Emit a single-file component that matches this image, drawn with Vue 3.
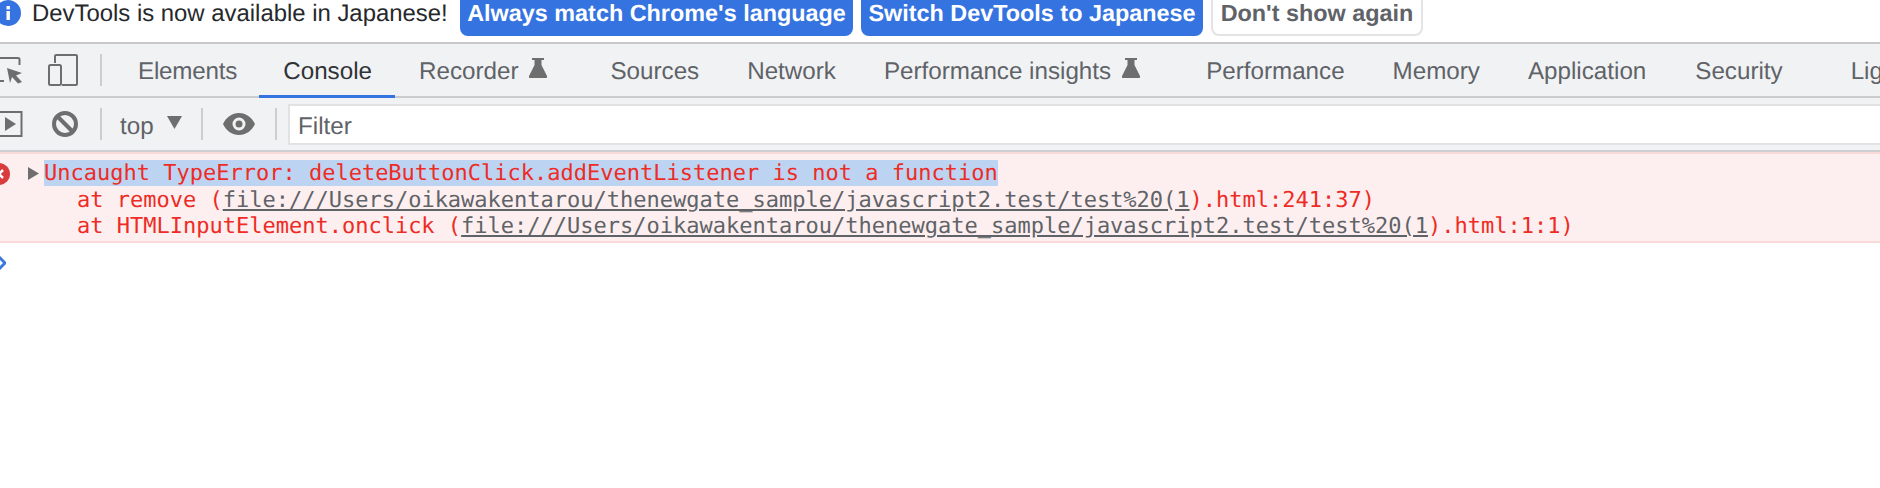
<script setup>
const tabs = [
  { name: 'Elements', pad: 22 },
  { name: 'Console', active: true, pad: 23 },
  { name: 'Recorder', flask: true, pad: 39 },
  { name: 'Sources', pad: 24 },
  { name: 'Network', pad: 24 },
  { name: 'Performance insights', flask: true, pad: 42 },
  { name: 'Performance', pad: 24 },
  { name: 'Memory', pad: 24 },
  { name: 'Application', pad: 25 },
  { name: 'Security', pad: 44 },
  { name: 'Lighthouse', pad: 24 }
]
const base = 'file:///Users/oikawakentarou/thenewgate_sample/javascript2.test/test%20(1'
</script>

<template>
  <div class="page">
    <div class="banner">
      <svg class="info" width="26" height="26" viewBox="0 0 26 26">
        <circle cx="13" cy="13" r="13" fill="#3473e0" />
        <rect x="11.500" y="6" width="3.400" height="3.400" fill="#fff" />
        <rect x="11.500" y="11" width="3.400" height="9" fill="#fff" />
      </svg>
      <span class="banner-text">DevTools is now available in Japanese!</span>
      <button class="btn primary first">Always match Chrome's language</button>
      <button class="btn primary">Switch DevTools to Japanese</button>
      <button class="btn plain">Don't show again</button>
    </div>

    <div class="tabbar">
      <svg class="inspect" width="30" height="32" viewBox="0 0 30 32">
        <path d="M0 4H24a1.500 1.500 0 0 1 1.500 1.500V11M0 27H10" fill="none" stroke="#6e6e6e" stroke-width="2" />
        <path d="M13 14L28 19L22 21.500L28 28L24 29.500L18 23L16 29Z" fill="#6e6e6e" />
      </svg>
      <svg class="device" width="30" height="32" viewBox="0 0 30 32">
        <path d="M7 9V2a1 1 0 0 1 1-1H28a1 1 0 0 1 1 1V30a1 1 0 0 1-1 1H14" fill="none" stroke="#6e6e6e" stroke-width="2" />
        <rect x="1" y="11" width="12" height="20" rx="1.500" fill="none" stroke="#6e6e6e" stroke-width="2" />
      </svg>
      <span class="sep sep-first"></span>
      <div class="tabs">
        <div
          v-for="t in tabs"
          :key="t.name"
          class="tab"
          :class="{ active: t.active }"
          :style="{ paddingRight: t.pad + 'px' }"
        >
          <span>{{ t.name }}</span>
          <svg v-if="t.flask" class="flask" width="18" height="20" viewBox="0 0 18 20">
            <path d="M3 0H15V2H12.500V7L18 18a1.300 1.300 0 0 1-1 2H1a1.300 1.300 0 0 1-1-2L5.500 7V2H3Z" fill="#6e6e6e" />
          </svg>
        </div>
      </div>
    </div>

    <div class="filterbar">
      <svg class="play" width="23" height="26" viewBox="0 0 23 26">
        <path d="M0 1H21.500V25H0" fill="none" stroke="#6e6e6e" stroke-width="2" />
        <path d="M5 6L16 13L5 20Z" fill="#6e6e6e" />
      </svg>
      <svg class="block" width="26" height="26" viewBox="0 0 26 26">
        <circle cx="13" cy="13" r="11" fill="none" stroke="#6e6e6e" stroke-width="4" />
        <path d="M5.500 5.500L20.500 20.500" stroke="#6e6e6e" stroke-width="4" />
      </svg>
      <span class="sep sep-a"></span>
      <span class="context">top</span>
      <svg class="caret" width="15" height="13" viewBox="0 0 15 13"><path d="M0 0H15L7.500 13Z" fill="#6e6e6e" /></svg>
      <span class="sep sep-b"></span>
      <svg class="eye" width="32" height="22" viewBox="0 0 32 22">
        <path fill-rule="evenodd" d="M0 11C3.500 4 9 0 16 0S28.500 4 32 11C28.500 18 23 22 16 22S3.500 18 0 11ZM16 4.500a6.500 6.500 0 1 0 0 13a6.500 6.500 0 1 0 0-13ZM16 7.500a3.500 3.500 0 1 1 0 7a3.500 3.500 0 1 1 0-7Z" fill="#6e6e6e" />
      </svg>
      <span class="sep sep-c"></span>
      <div class="filter">Filter</div>
    </div>

    <div class="error">
      <svg class="err-icon" width="22" height="22" viewBox="0 0 22 22">
        <circle cx="11" cy="11" r="11" fill="#d93c3c" />
        <path d="M7 7L15 15M15 7L7 15" stroke="#fff" stroke-width="2.500" />
      </svg>
      <svg class="arrow" width="11" height="13" viewBox="0 0 11 13"><path d="M0 0L11 6.500L0 13Z" fill="#6e6e6e" /></svg>
      <div class="msg">
        <div class="sel">Uncaught TypeError: deleteButtonClick.addEventListener is not a function</div>
        <div class="line">at remove (<span class="link">{{ base }}</span>).html:241:37)</div>
        <div class="line">at HTMLInputElement.onclick (<span class="link">{{ base }}</span>).html:1:1)</div>
      </div>
    </div>

    <div class="prompt">
      <svg width="8" height="14" viewBox="0 0 8 14"><path d="M1 1L7 7L1 13" fill="none" stroke="#3a78e0" stroke-width="3" /></svg>
    </div>
  </div>
</template>

<style>
html, body { margin: 0; background: #fff; overflow: hidden; }
</style>

<style scoped>
.page {
  width: 1880px;
  height: 488px;
  overflow: hidden;
  background: #fff;
  font-family: "Liberation Sans", Arial, sans-serif;
  text-rendering: geometricPrecision;
}
.banner {
  height: 42px;
  display: flex;
  align-items: flex-start;
  overflow: hidden;
}
.info { margin: 0 11px 0 -5px; flex: none; }
.banner-text {
  margin-top: 1px;
  font-size: 23.900px;
  line-height: 26px;
  color: #26282b;
  white-space: nowrap;
  width: 414px;
  flex: none;
}
.btn {
  height: 46px;
  margin: -10px 8px 0 0;
  padding: 0;
  border: 0;
  border-radius: 8px;
  font: bold 23.400px/26px "Liberation Sans", Arial, sans-serif;
  text-rendering: geometricPrecision;
  white-space: nowrap;
  flex: none;
}
.primary { background: #3473e0; color: #fff; }
.first { margin-left: 14px; width: 393px; }
.primary:not(.first) { width: 342px; }
.plain {
  width: 212px;
  background: #fff;
  color: #5f6368;
  border: 2px solid #e4e4e6;
}
.tabbar {
  height: 52px;
  border-top: 2px solid #c8c8cb;
  border-bottom: 2px solid #cbcbce;
  background: #f1f2f4;
  display: flex;
  align-items: center;
}
.inspect { margin-left: -6px; flex: none; }
.device { margin-left: 24px; flex: none; }
.sep {
  width: 2px;
  height: 32px;
  background: #cdcdd0;
  flex: none;
}
.sep-first { margin-left: 22px; }
.tabs {
  display: flex;
  align-self: flex-start;
  margin-left: 12px;
  flex: none;
}
.tab {
  display: flex;
  align-items: center;
  padding: 5px 24px 0;
  font-size: 24.200px;
  color: #5f6368;
  white-space: nowrap;
  border-bottom: 3px solid transparent;
  box-sizing: border-box;
  height: 54px;
}
.tab:first-child { letter-spacing: -0.200px; }
.tab.active { color: #303236; border-bottom-color: #3473e0; }
.flask { margin-left: 11px; margin-top: -8px; }
.filterbar {
  height: 52px;
  border-bottom: 2px solid #cfcfd3;
  background: #f1f2f4;
  display: flex;
  align-items: center;
  overflow: hidden;
}
.play { flex: none; }
.block { margin-left: 29px; flex: none; }
.sep-a { margin-left: 22px; }
.context {
  margin-left: 18px;
  padding-top: 6px;
  font-size: 24.200px;
  color: #5f6368;
  width: 33px;
  flex: none;
}
.caret { margin-left: 14px; margin-top: -4px; flex: none; }
.sep-b { margin-left: 19px; }
.eye { margin-left: 20px; flex: none; }
.sep-c { margin-left: 20px; }
.filter {
  margin: 1px 0 0 11px;
  flex: 1;
  height: 41px;
  box-sizing: border-box;
  border: 2px solid #e2e2e4;
  border-right: 0;
  background: #fff;
  font-size: 24.200px;
  line-height: 41px;
  padding-left: 8px;
  color: #5f6368;
}
.error {
  height: 91px;
  box-sizing: border-box;
  background: #fdefef;
  border-top: 2px solid #fad9d9;
  border-bottom: 2px solid #fad9d9;
  display: flex;
  align-items: flex-start;
  padding-top: 6px;
}
.err-icon { margin: 3px 0 0 -12px; flex: none; }
.arrow { margin: 7px 0 0 18px; flex: none; }
.msg {
  margin-left: 5px;
  font-family: "DejaVu Sans Mono", monospace;
  font-size: 22px;
  color: #ee2b24;
  white-space: pre;
}
.sel {
  width: fit-content;
  height: 26px;
  line-height: 28px;
  margin-bottom: 1.500px;
  background: #bcd3f2;
}
.line { height: 26.700px; line-height: 26.700px; margin-left: 33px; }
.link { color: #5f6368; text-decoration: underline; }
.prompt { height: 40px; margin-left: -2px; display: flex; align-items: center; }
</style>
